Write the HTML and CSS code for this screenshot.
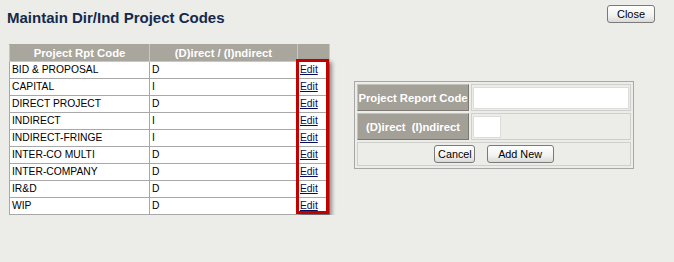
FILE: index.html
```html
<!DOCTYPE html>
<html lang="en">
<head>
    <meta charset="UTF-8">
    <title>Maintain Dir/Ind Project Codes</title>
    <link rel="stylesheet" href="styles.css">
</head>
<body>
    <div class="top">
        <h1 class="title">Maintain Dir/Ind Project Codes</h1>
        <button class="btn close">Close</button>
    </div>

    <div class="main">
        <div class="list-wrap">
            <table class="list">
                <colgroup>
                    <col class="c-code">
                    <col class="c-type">
                    <col class="c-edit">
                </colgroup>
                <tr>
                    <th>Project Rpt Code</th>
                    <th>(D)irect / (I)ndirect</th>
                    <th></th>
                </tr>
                <tr><td>BID &amp; PROPOSAL</td><td>D</td><td><a href="#">Edit</a></td></tr>
                <tr><td>CAPITAL</td><td>I</td><td><a href="#">Edit</a></td></tr>
                <tr><td>DIRECT PROJECT</td><td>D</td><td><a href="#">Edit</a></td></tr>
                <tr><td>INDIRECT</td><td>I</td><td><a href="#">Edit</a></td></tr>
                <tr><td>INDIRECT-FRINGE</td><td>I</td><td><a href="#">Edit</a></td></tr>
                <tr><td>INTER-CO MULTI</td><td>D</td><td><a href="#">Edit</a></td></tr>
                <tr><td>INTER-COMPANY</td><td>D</td><td><a href="#">Edit</a></td></tr>
                <tr><td>IR&amp;D</td><td>D</td><td><a href="#">Edit</a></td></tr>
                <tr><td>WIP</td><td>D</td><td><a href="#">Edit</a></td></tr>
            </table>
            <div class="highlight"></div>
        </div>

        <table class="form">
            <tr>
                <td class="label">Project Report Code</td>
                <td class="field"><input type="text" class="input code"></td>
            </tr>
            <tr>
                <td class="label">(D)irect &nbsp;(I)ndirect</td>
                <td class="field"><input type="text" class="input type"></td>
            </tr>
            <tr>
                <td class="actions" colspan="2">
                    <button class="btn cancel">Cancel</button>
                    <button class="btn add">Add New</button>
                </td>
            </tr>
        </table>
    </div>
</body>
</html>
```

FILE: styles.css
```css
body {
    margin: 0;
    background: #ecece9;
    font-family: 'Liberation Sans', Arial, sans-serif;
    color: #000;
}

.top {
    display: flex;
    justify-content: space-between;
    align-items: flex-start;
    padding: 5px 19px 0 7px;
}

.title {
    margin: 4px 0 0;
    font-size: 15px;
    line-height: 17px;
    font-weight: bold;
    color: #15294b;
}

.btn {
    font-family: 'Liberation Sans', Arial, sans-serif;
    height: 18px;
    padding: 0;
    border: 1px solid #7a7a7a;
    border-radius: 3px;
    background: linear-gradient(#ffffff, #f2f2f0 60%, #d9d9d6);
    color: #000;
    cursor: pointer;
}

.close {
    width: 48px;
    font-size: 11px;
}

.main {
    display: flex;
    align-items: flex-start;
    padding-left: 9px;
    margin-top: 18px;
}

.list-wrap {
    position: relative;
}

.list {
    border-collapse: collapse;
    table-layout: fixed;
    width: 320px;
    background: #fff;
    font-size: 10.3px;
}

.c-code { width: 140px; }
.c-type { width: 148px; }
.c-edit { width: 32px; }

.list th {
    height: 16px;
    padding: 0;
    background: #a9a69e;
    color: #fff;
    font-size: 11.3px;
    font-weight: bold;
    text-align: center;
    border: 1px solid #c9c7c1;
    border-top-color: #a9a69e;
}

.list td {
    height: 16px;
    padding: 0 2px;
    line-height: 16px;
    border: 1px solid #a8a8a8;
    white-space: nowrap;
}

.list td a {
    color: #0a0a5a;
}

.highlight {
    position: absolute;
    left: 287px;
    top: 15px;
    width: 27px;
    height: 149px;
    border: 3px solid #c20000;
    box-shadow: 3px 3px 4px rgba(0, 0, 0, 0.4);
}

.form {
    margin: 37px 0 0 24px;
    width: 280px;
    border: 1px solid #a7a7a7;
    border-spacing: 2px;
    font-size: 11.3px;
}

.form td {
    padding: 0;
}

.label {
    width: 110px;
    height: 25px;
    background: #a3a098;
    color: #fff;
    font-weight: bold;
    text-align: center;
    white-space: nowrap;
    border: 1px solid;
    border-color: #c4c1ba #7c7972 #7c7972 #c4c1ba;
}

.field {
    border: 1px solid #cfcfcc;
    padding-left: 1px !important;
}

.input {
    display: block;
    height: 22px;
    box-sizing: border-box;
    border: 1px solid #dcdcda;
    background: #fff;
    padding: 0 2px;
}

.input.code { width: 156px; }
.input.type { width: 28px; }

.actions {
    height: 22px;
    text-align: center;
    border: 1px solid #cfcfcc;
}

.cancel,
.add {
    font-size: 10.8px;
    vertical-align: middle;
}

.cancel { width: 41px; margin-right: 8px; }
.add { width: 67px; }
```
